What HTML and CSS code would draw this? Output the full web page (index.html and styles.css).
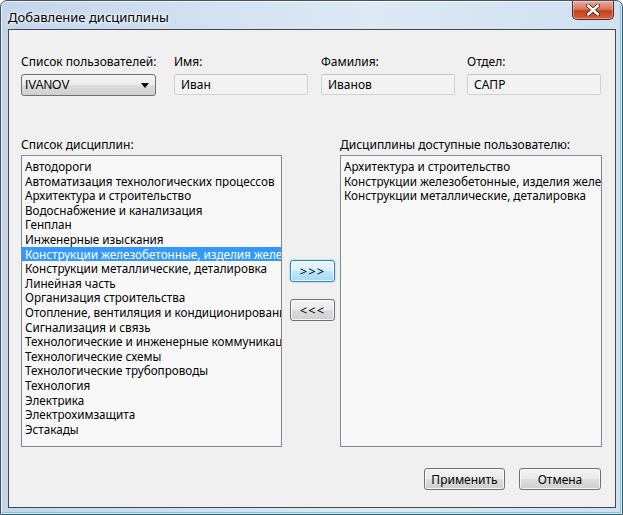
FILE: index.html
```html
<!DOCTYPE html>
<html lang="ru">
<head>
<meta charset="utf-8">
<title>Добавление дисциплины</title>
<link rel="stylesheet" href="styles.css">
</head>
<body>
<div class="window">
  <div class="titlebar">
    <span class="title">Добавление дисциплины</span>
    <span class="close" aria-label="Закрыть">
      <svg width="16" height="12" viewBox="0 0 16 12"><path d="M3 1.5 L13 10.5 M13 1.5 L3 10.5" stroke="#4a1a10" stroke-width="4" stroke-linecap="round"/><path d="M3 1.5 L13 10.5 M13 1.5 L3 10.5" stroke="#ffffff" stroke-width="2.4" stroke-linecap="round"/></svg>
    </span>
  </div>
  <div class="client">
    <div class="fields">
      <div class="field f1">
        <div class="label">Список пользователей:</div>
        <div class="combo"><span>IVANOV</span><span class="arrow"></span></div>
      </div>
      <div class="field f2">
        <div class="label">Имя:</div>
        <div class="textbox">Иван</div>
      </div>
      <div class="field f3">
        <div class="label">Фамилия:</div>
        <div class="textbox">Иванов</div>
      </div>
      <div class="field f4">
        <div class="label">Отдел:</div>
        <div class="textbox">САПР</div>
      </div>
    </div>
    <div class="lists">
      <div class="listcol">
        <div class="label">Список дисциплин:</div>
        <ul class="listbox">
          <li>Автодороги</li>
          <li>Автоматизация технологических процессов</li>
          <li>Архитектура и строительство</li>
          <li>Водоснабжение и канализация</li>
          <li>Генплан</li>
          <li>Инженерные изыскания</li>
          <li class="selected">Конструкции железобетонные, изделия железобетонные</li>
          <li>Конструкции металлические, деталировка</li>
          <li>Линейная часть</li>
          <li>Организация строительства</li>
          <li>Отопление, вентиляция и кондиционирование</li>
          <li>Сигнализация и связь</li>
          <li>Технологические и инженерные коммуникации</li>
          <li>Технологические схемы</li>
          <li>Технологические трубопроводы</li>
          <li>Технология</li>
          <li>Электрика</li>
          <li>Электрохимзащита</li>
          <li>Эстакады</li>
        </ul>
      </div>
      <div class="movebtns">
        <button class="btn move hot">&gt;&gt;&gt;</button>
        <button class="btn move">&lt;&lt;&lt;</button>
      </div>
      <div class="listcol">
        <div class="label">Дисциплины доступные пользователю:</div>
        <ul class="listbox">
          <li>Архитектура и строительство</li>
          <li>Конструкции железобетонные, изделия железобетонные</li>
          <li>Конструкции металлические, деталировка</li>
        </ul>
      </div>
    </div>
    <div class="actions">
      <button class="btn action apply">Применить</button>
      <button class="btn action">Отмена</button>
    </div>
  </div>
</div>
</body>
</html>
```
FILE: styles.css
```css
html, body {
  margin: 0;
  padding: 0;
  background: #ffffff;
}
body {
  width: 623px;
  height: 515px;
  overflow: hidden;
  font-family: "Noto Sans", "Open Sans", sans-serif;
  font-size: 12px;
  color: #000;
}
.window {
  box-sizing: border-box;
  width: 623px;
  height: 515px;
  border: 1px solid #46535f;
  border-radius: 7px 7px 0 0;
  background: linear-gradient(90deg, #c2d5ea 0%, #d3e2f2 35%, #dde9f5 60%, #cfe0f1 100%);
  box-shadow: inset 0 0 0 1px rgba(255,255,255,0.7), inset -2px -2px 0 0 #6cc8ee;
  display: flex;
  flex-direction: column;
}
.titlebar {
  height: 28px;
  display: flex;
  align-items: flex-start;
  justify-content: space-between;
}
.title {
  margin: 7px 0 0 7px;
  font-size: 13px;
  color: #000;
  text-shadow: 0 0 6px #fff, 0 0 3px #fff;
}
.close {
  box-sizing: border-box;
  width: 42px;
  height: 19px;
  margin-right: 8px;
  border: 1px solid #5a2820;
  border-top: none;
  border-radius: 0 0 5px 5px;
  background: linear-gradient(180deg, #e9a99a 0%, #d9785f 45%, #c2401f 55%, #d9603a 100%);
  display: flex;
  align-items: center;
  justify-content: center;
  box-shadow: inset 0 0 0 1px rgba(255,255,255,0.35);
}
.client {
  flex: 1;
  margin: 0 6px 6px 7px;
  border: 1px solid #404850;
  background: #f0f0f0;
  display: flex;
  flex-direction: column;
  padding: 0 0 0 12px;
}
.label {
  height: 15px;
  line-height: 15px;
  white-space: nowrap;
}
.fields {
  display: grid;
  grid-template-columns: 153px 147px 146px 134px;
  margin-top: 24px;
}
.field .label {
  margin-bottom: 5px;
}
.combo {
  box-sizing: border-box;
  width: 135px;
  height: 22px;
  border: 1px solid #707070;
  border-radius: 3px;
  background: linear-gradient(180deg, #f4f4f4 0%, #ececec 48%, #dcdcdc 52%, #cfcfcf 100%);
  display: flex;
  align-items: center;
  justify-content: space-between;
  padding: 0 6px 0 3px;
  font-family: "Liberation Sans", sans-serif;
  font-size: 12px;
}
.arrow {
  width: 0;
  height: 0;
  border-left: 4px solid transparent;
  border-right: 4px solid transparent;
  border-top: 5px solid #000;
}
.textbox {
  box-sizing: border-box;
  width: 134px;
  height: 21px;
  margin-top: 0;
  border: 1px solid #d2d2d2;
  border-top-color: #c4c4c4;
  border-radius: 2px;
  background: #f3f3f3;
  padding: 0 6px;
  line-height: 19px;
}
.lists {
  display: flex;
  margin-top: 41px;
}
.listcol .label {
  margin-bottom: 3px;
}
.listbox {
  box-sizing: border-box;
  width: 261px;
  height: 292px;
  margin: 0;
  padding: 3px 0 0 0;
  list-style: none;
  border: 1px solid #828790;
  background: #f8f8f8;
  overflow: hidden;
  font-size: 11.7px;
}
.listcol:last-child .listbox {
  width: 262px;
}
.listbox li {
  height: 14.6px;
  line-height: 14.6px;
  padding-left: 3px;
  white-space: nowrap;
  overflow: hidden;
}
.listbox li.selected {
  background: #3399ff;
  color: #fff;
}
.movebtns {
  width: 58px;
  display: flex;
  flex-direction: column;
  align-items: center;
  padding-top: 123px;
  gap: 17px;
}
.btn {
  box-sizing: border-box;
  font-family: "Noto Sans", "Open Sans", sans-serif;
  font-size: 12px;
  color: #000;
  border: 1px solid #707070;
  border-radius: 3px;
  background: linear-gradient(180deg, #f2f2f2 0%, #ebebeb 48%, #dddddd 52%, #cfcfcf 100%);
  box-shadow: inset 0 0 0 1px rgba(255,255,255,0.8);
  padding: 0;
  margin: 0;
}
.move {
  width: 45px;
  height: 22px;
  margin-left: 2px;
  font-size: 13px;
  letter-spacing: 1px;
  padding-left: 1px;
}
.move.hot {
  border-color: #3c7fb1;
  background: linear-gradient(180deg, #eaf6fd 0%, #d9f0fc 48%, #bee6fd 52%, #a7d9f5 100%);
  box-shadow: inset 0 0 0 1px rgba(255,255,255,0.8), 0 0 2px #5cc4f2;
}
.actions {
  display: flex;
  justify-content: flex-end;
  gap: 14px;
  margin-top: 21px;
  padding-right: 14px;
}
.action {
  width: 82px;
  height: 22px;
}
.action.apply {
  width: 81px;
}
```
